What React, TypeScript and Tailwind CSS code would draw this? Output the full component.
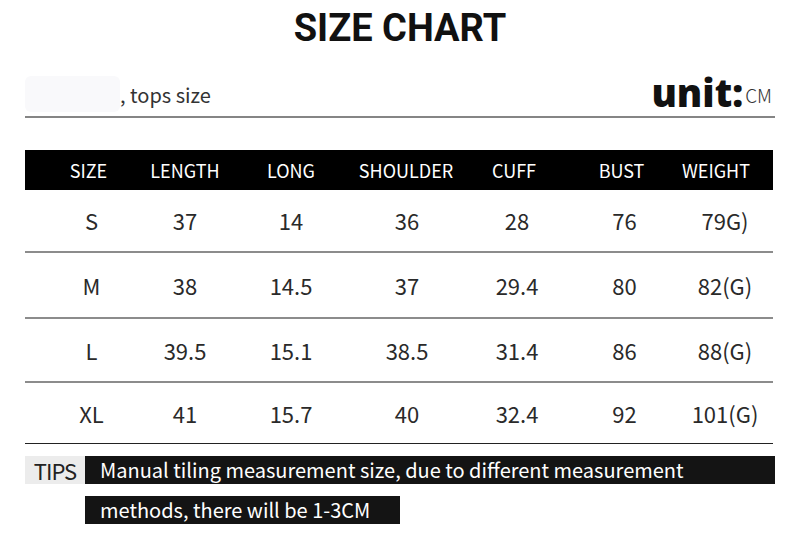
import React from 'react';

const cols = [
  'w-[115px] pl-[18px]',
  'w-[90px]',
  'w-[122px]',
  'w-[110px]',
  'w-[110px]',
  'w-[105px]',
  'w-[96px]',
];

// header labels sit a touch left of the numbers under them
const headCols = [
  'w-[115px] pl-[12px]',
  'w-[90px]',
  'w-[122px]',
  'w-[110px] pr-[2px]',
  'w-[110px] pr-[6px]',
  'w-[105px] pr-[6px]',
  'w-[96px] pr-[18px]',
];

const headers = ['SIZE', 'LENGTH', 'LONG', 'SHOULDER', 'CUFF', 'BUST', 'WEIGHT'];

const rows = [
  { h: 'h-[63px]', line: 'border-b-2 border-[#8c8c8c]', cells: ['S', '37', '14', '36', '28', '76', '79G)'] },
  { h: 'h-[66px]', line: 'border-b-2 border-[#8c8c8c]', cells: ['M', '38', '14.5', '37', '29.4', '80', '82(G)'] },
  { h: 'h-[64px]', line: 'border-b-2 border-[#8c8c8c]', cells: ['L', '39.5', '15.1', '38.5', '31.4', '86', '88(G)'] },
  { h: 'h-[61px]', line: 'border-b border-[#222]', cells: ['XL', '41', '15.7', '40', '32.4', '92', '101(G)'] },
];

const cjk = "font-['Noto_Sans_CJK_SC','Noto_Sans',sans-serif]";

const App: React.FC = () => {
  return (
    <div className={`w-[800px] h-[544px] bg-white overflow-hidden ${cjk}`}>
      <h1 className="pt-[8px] text-center text-[38px] leading-[40px] font-bold text-[#111] font-['Roboto','Liberation_Sans',sans-serif]">
        SIZE CHART
      </h1>

      <div className="mx-[25px] mt-[24px] flex items-end justify-between border-b-2 border-[#858585] pb-[4px] h-[46px]">
        <div className="flex items-end">
          <div className="w-[95px] h-[36px] rounded-md bg-[#f9f9fb]" />
          <span className="text-[20px] leading-[24px] text-[#333] pb-[5px]">, tops size</span>
        </div>
        <div className="flex items-end pr-[3px]">
          <span className="text-[38px] leading-[40px] font-extrabold text-[#111] font-['Open_Sans','DejaVu_Sans',sans-serif]">
            unit:
          </span>
          <span className="text-[19px] leading-[24px] font-light text-[#333] pb-[5px] ml-[2px]">CM</span>
        </div>
      </div>

      <div className="mx-[25px] mt-[32px] w-[748px]">
        <div className="flex h-[40px] items-center bg-black text-white text-[18px]">
          {headers.map((t, i) => (
            <div key={t} className={`${headCols[i]} flex justify-center whitespace-nowrap`}>
              {t}
            </div>
          ))}
        </div>
        {rows.map((r) => (
          <div key={r.cells[0]} className={`flex items-center ${r.h} ${r.line} text-[22px] text-[#2a2a2a]`}>
            {r.cells.map((c, i) => (
              <div key={i} className={`${cols[i]} flex justify-center whitespace-nowrap`}>
                {c}
              </div>
            ))}
          </div>
        ))}
      </div>

      <div className="mx-[25px] mt-[12px] flex h-[28px]">
        <div className="w-[60px] bg-[#ececec] flex items-center justify-center text-[22px] text-[#222] tracking-[-1px]">
          TIPS
        </div>
        <div className="w-[690px] bg-[#141414] flex items-center pl-[15px] text-[20px] text-white whitespace-nowrap">
          Manual tiling measurement size, due to different measurement
        </div>
      </div>
      <div className="ml-[85px] mt-[12px] w-[315px] h-[28px] bg-[#141414] flex items-center pl-[15px] text-[20px] text-white whitespace-nowrap">
        methods, there will be 1-3CM
      </div>
    </div>
  );
};

export default App;
